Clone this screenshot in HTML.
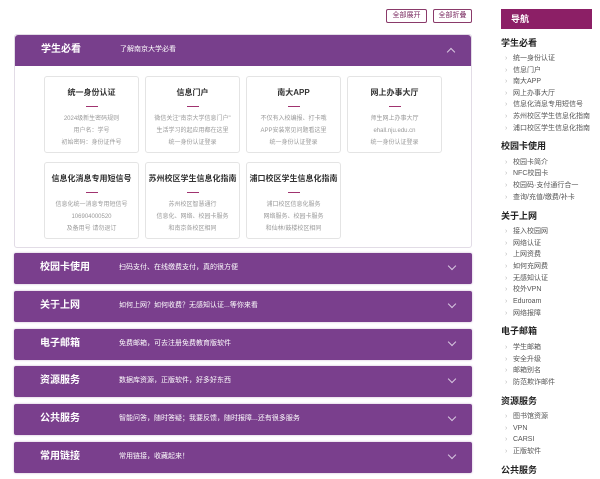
<!DOCTYPE html>
<html><head><meta charset="utf-8"><style>
*{margin:0;padding:0;box-sizing:border-box}
body{width:600px;height:479px;background:#fff;font-family:"Liberation Sans","Noto Sans CJK SC",sans-serif;position:relative;overflow:hidden;color:#333}
.btn{position:absolute;top:9px;height:14px;border:1px solid #8a3a6a;border-radius:2px;font-size:7px;color:#7a2a60;text-align:center;line-height:12px}
.panel{position:absolute;left:14px;top:34px;width:458px;height:214px;border:1px solid #e2dce6;border-radius:3px}
.hd{position:absolute;left:0;top:0;width:100%;height:31px;background:#783f8c;border-radius:3px 3px 0 0}
.bar{position:absolute;left:14px;width:458px;height:31px;background:#7a3f8d;border-radius:2px;box-shadow:0 0 2px #c9b4d2}
.t{position:absolute;left:26px;top:0;line-height:30px;font-size:10px;font-weight:bold;color:#fff}
.d{position:absolute;left:105px;top:0;line-height:30px;font-size:7px;color:#fff}
.ch{position:absolute;right:17px;top:10px;width:6px;height:6px;border-right:1px solid #d8c8e0;border-bottom:1px solid #d8c8e0;transform:rotate(45deg)}
.up{transform:rotate(-135deg);top:14px}
.card{position:absolute;width:95px;height:77px;border:1px solid #e4e4e4;border-radius:3px;text-align:center;background:#fff}
.card b{display:block;margin-top:10px;font-size:8px;line-height:11px;color:#333}
.card i{display:block;width:12px;height:1px;background:#a0336f;margin:8px auto 6px}
.card p{font-size:6px;color:#999;line-height:12px}
.nav{position:absolute;left:501px;top:9px;width:91px;height:20px;background:#8c1f66;color:#fff;font-size:9px;line-height:20px;font-weight:bold;padding-left:10px}
.h{position:absolute;left:501px;font-size:9px;line-height:11px;font-weight:bold;color:#222}
.it{position:absolute;left:513px;font-size:7px;line-height:9px;color:#555}
.it:before{content:"›";position:absolute;left:-8px;color:#bbb}
</style></head><body>
<div class="btn" style="left:386px;width:41px">全部展开</div>
<div class="btn" style="left:433px;width:39px">全部折叠</div>
<div class="panel"><div class="hd"><div class="t">学生必看</div><div class="d">了解南京大学必看</div><div class="ch up"></div></div>
<div class="card" style="left:29px;top:41px"><b>统一身份认证</b><i></i><p>2024级新生密码规则<br>用户名：学号<br>初始密码：身份证件号</p></div>
<div class="card" style="left:130px;top:41px"><b>信息门户</b><i></i><p>微信关注"南京大学信息门户"<br>生活学习的起应用都在这里<br>统一身份认证登录</p></div>
<div class="card" style="left:231px;top:41px"><b>南大APP</b><i></i><p>不仅有入校编报、打卡哦<br>APP安装常见问题看这里<br>统一身份认证登录</p></div>
<div class="card" style="left:332px;top:41px"><b>网上办事大厅</b><i></i><p>师生网上办事大厅<br>ehall.nju.edu.cn<br>统一身份认证登录</p></div>
<div class="card" style="left:29px;top:127px"><b>信息化消息专用短信号</b><i></i><p>信息化统一消息专用短信号<br>106904000520<br>及备用号 请勿退订</p></div>
<div class="card" style="left:130px;top:127px"><b>苏州校区学生信息化指南</b><i></i><p>苏州校区智慧通行<br>信息化、网络、校园卡服务<br>和南京各校区相同</p></div>
<div class="card" style="left:231px;top:127px"><b>浦口校区学生信息化指南</b><i></i><p>浦口校区信息化服务<br>网络服务、校园卡服务<br>和仙林/鼓楼校区相同</p></div>
</div>
<div class="bar" style="top:253px"><div class="t">校园卡使用</div><div class="d">扫码支付、在线缴费支付，真的很方便</div><div class="ch"></div></div>
<div class="bar" style="top:291px"><div class="t">关于上网</div><div class="d">如何上网？如何收费？无感知认证...等你来看</div><div class="ch"></div></div>
<div class="bar" style="top:329px"><div class="t">电子邮箱</div><div class="d">免费邮箱，可去注册免费教育版软件</div><div class="ch"></div></div>
<div class="bar" style="top:366px"><div class="t">资源服务</div><div class="d">数据库资源，正版软件，好多好东西</div><div class="ch"></div></div>
<div class="bar" style="top:404px"><div class="t">公共服务</div><div class="d">智能问答，随时答疑；我要反馈，随时报障...还有很多服务</div><div class="ch"></div></div>
<div class="bar" style="top:442px"><div class="t">常用链接</div><div class="d">常用链接，收藏起来！</div><div class="ch"></div></div>
<div class="nav">导航</div>
<div class="h" style="top:38px">学生必看</div>
<div class="it" style="top:54px">统一身份认证</div><div class="it" style="top:66px">信息门户</div><div class="it" style="top:77px">南大APP</div><div class="it" style="top:89px">网上办事大厅</div><div class="it" style="top:100px">信息化消息专用短信号</div><div class="it" style="top:112px">苏州校区学生信息化指南</div><div class="it" style="top:124px">浦口校区学生信息化指南</div>
<div class="h" style="top:141px">校园卡使用</div>
<div class="it" style="top:158px">校园卡简介</div><div class="it" style="top:169px">NFC校园卡</div><div class="it" style="top:181px">校园码·支付通行合一</div><div class="it" style="top:193px">查询/充值/缴费/补卡</div>
<div class="h" style="top:211px">关于上网</div>
<div class="it" style="top:227px">接入校园网</div><div class="it" style="top:239px">网络认证</div><div class="it" style="top:250px">上网资费</div><div class="it" style="top:262px">如何充网费</div><div class="it" style="top:274px">无感知认证</div><div class="it" style="top:285px">校外VPN</div><div class="it" style="top:297px">Eduroam</div><div class="it" style="top:309px">网络报障</div>
<div class="h" style="top:326px">电子邮箱</div>
<div class="it" style="top:343px">学生邮箱</div><div class="it" style="top:355px">安全升级</div><div class="it" style="top:366px">邮箱别名</div><div class="it" style="top:378px">防范欺诈邮件</div>
<div class="h" style="top:396px">资源服务</div>
<div class="it" style="top:412px">图书馆资源</div><div class="it" style="top:424px">VPN</div><div class="it" style="top:435px">CARSI</div><div class="it" style="top:447px">正版软件</div>
<div class="h" style="top:465px">公共服务</div>
</body></html>
